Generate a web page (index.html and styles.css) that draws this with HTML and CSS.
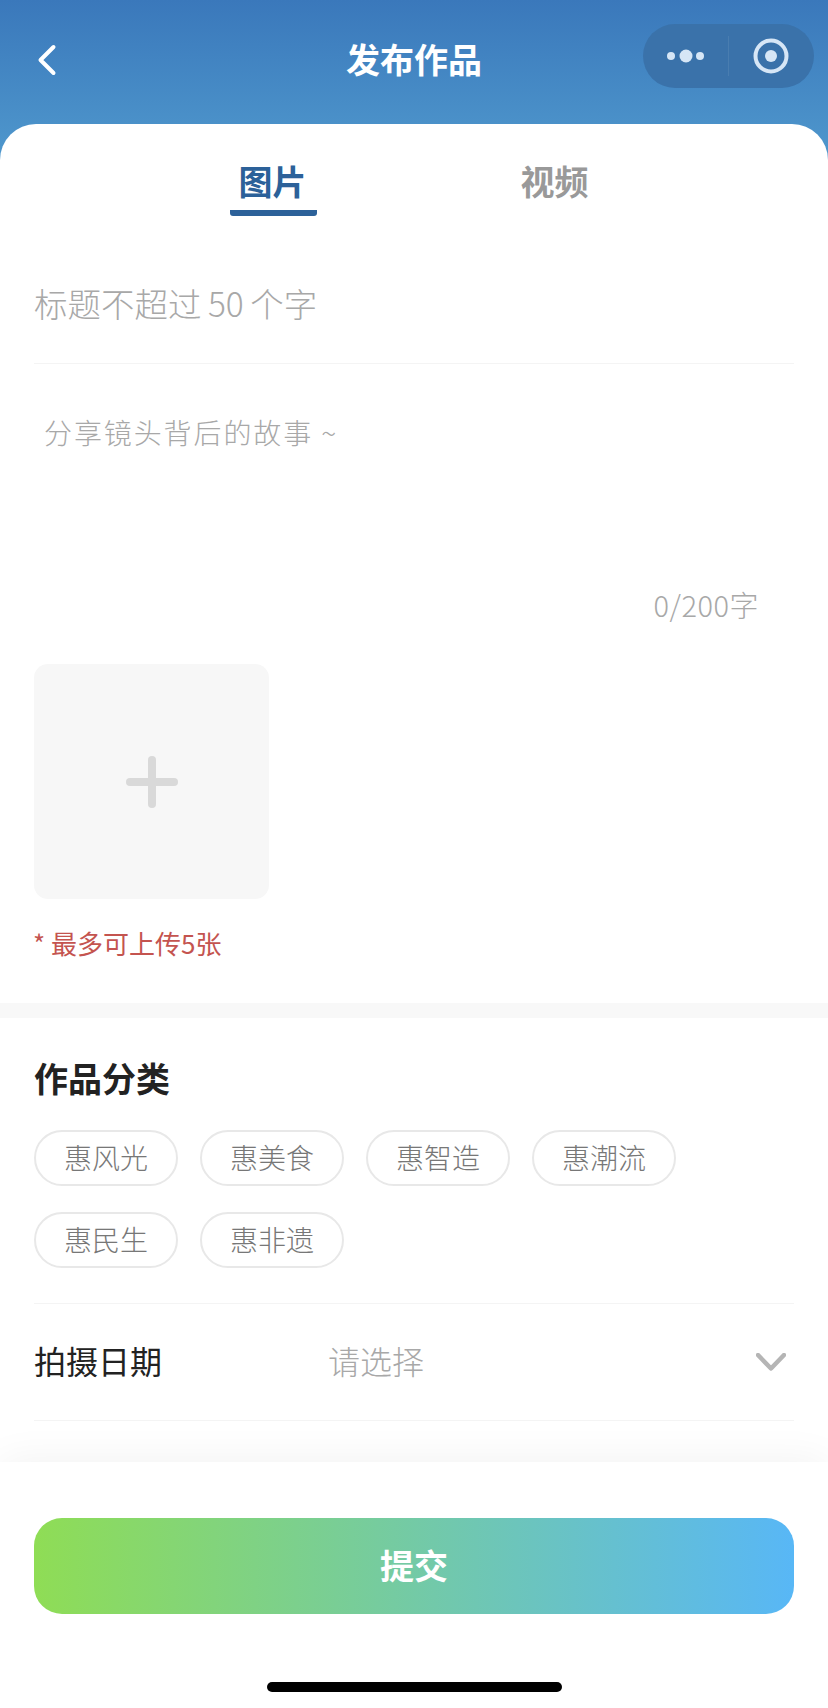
FILE: index.html
```html
<!DOCTYPE html>
<html lang="zh-CN">
<head>
<meta charset="utf-8">
<title>发布作品</title>
<link rel="stylesheet" href="styles.css">
</head>
<body>
<div class="page">
  <header class="navbar">
    <svg class="back" width="20" height="32" viewBox="0 0 20 32"><path d="M16.500 3 3.500 16 16.500 29" fill="none" stroke="#fff" stroke-width="4" stroke-linecap="round" stroke-linejoin="round"/></svg>
    <h1 class="nav-title">发布作品</h1>
    <div class="capsule">
      <svg class="capsule-more" width="85" height="64" viewBox="0 0 85 64"><circle cx="28" cy="32" r="4" fill="#d6e6f6"/><circle cx="43" cy="32" r="6.500" fill="#d6e6f6"/><circle cx="57" cy="32" r="4" fill="#d6e6f6"/></svg>
      <span class="capsule-line"></span>
      <svg class="capsule-close" width="85" height="64" viewBox="0 0 85 64"><circle cx="42" cy="32" r="15.500" fill="none" stroke="#d6e6f6" stroke-width="4"/><circle cx="42" cy="32" r="6" fill="#d6e6f6"/></svg>
    </div>
  </header>

  <main class="card">
    <nav class="tabs">
      <div class="tab tab-active">图片</div>
      <div class="tab">视频</div>
    </nav>

    <div class="field-title">标题不超过 50 个字</div>
    <div class="field-story">分享镜头背后的故事 ~</div>
    <div class="counter">0/200字</div>

    <div class="upload">
      <span class="upload-plus"></span>
    </div>
    <p class="note">* 最多可上传5张</p>

    <div class="band"></div>

    <section class="category">
      <h2 class="section-title">作品分类</h2>
      <div class="tags">
        <span class="tag">惠风光</span>
        <span class="tag">惠美食</span>
        <span class="tag">惠智造</span>
        <span class="tag">惠潮流</span>
        <span class="tag">惠民生</span>
        <span class="tag">惠非遗</span>
      </div>
      <div class="date-row">
        <span class="date-label">拍摄日期</span>
        <span class="date-value">请选择</span>
        <svg class="chevron" width="30" height="18" viewBox="0 0 30 18"><path d="M2 2 15 15.500 28 2" fill="none" stroke="#b5b5b5" stroke-width="4.500" stroke-linecap="round" stroke-linejoin="round"/></svg>
      </div>
    </section>
  </main>

  <footer class="footer">
    <button class="submit" type="button">提交</button>
    <div class="home-bar"></div>
  </footer>
</div>
</body>
</html>
```

FILE: styles.css
```css
* { box-sizing: border-box; }

html, body {
  margin: 0;
  padding: 0;
  background: #fff;
}

body {
  font-family: "Noto Sans CJK SC", "Noto Sans", sans-serif;
}

.page {
  width: 828px;
  height: 1708px;
  overflow: hidden;
  display: flex;
  flex-direction: column;
  background: linear-gradient(180deg, #3a78bb 0, #4f98cd 160px) no-repeat;
  background-size: 100% 160px;
}

.navbar {
  height: 124px;
  flex: none;
  padding: 24px 14px 0 37px;
  display: grid;
  grid-template-columns: 1fr auto 1fr;
  align-items: start;
}

.back {
  margin-top: 20px;
  display: block;
}

.nav-title {
  margin: 13px 0 0;
  font-size: 34px;
  line-height: 44px;
  font-weight: 700;
  color: #fff;
  transform: translateX(-11.500px);
}

.capsule {
  justify-self: end;
  width: 171px;
  height: 64px;
  border-radius: 32px;
  background: #3a72aa;
  display: flex;
  align-items: center;
}

.capsule-more, .capsule-close { display: block; flex: none; }

.capsule-line {
  width: 1px;
  height: 40px;
  flex: none;
  background: rgba(255, 255, 255, .08);
}

.card {
  flex: 1;
  min-height: 0;
  overflow: hidden;
  background: #fff;
  border-radius: 36px 36px 0 0;
  padding-top: 36px;
}

.tabs {
  display: flex;
  padding-left: 230px;
  gap: 194px;
}

.tab {
  width: 87px;
  height: 56px;
  font-size: 34px;
  line-height: 41px;
  font-weight: 700;
  text-align: center;
  color: #999;
}

.tab-active {
  padding-right: 2px;
  color: #2c6199;
  border-bottom: 6px solid #2c6199;
  border-radius: 0 0 3px 3px;
}

.field-title {
  margin: 0 34px;
  padding: 65px 0 38px;
  border-bottom: 1px solid #f4f4f4;
  font-size: 33.500px;
  line-height: 44px;
  word-spacing: -1px;
  font-weight: 300;
  color: #a8a8a8;
}

.field-story {
  margin-top: 48px;
  padding-left: 44px;
  font-size: 28px;
  line-height: 40px;
  letter-spacing: 1.900px;
  font-weight: 300;
  color: #a8a8a8;
}

.counter {
  margin-top: 132px;
  padding-right: 69px;
  text-align: right;
  font-size: 29px;
  line-height: 40px;
  letter-spacing: .5px;
  font-weight: 300;
  color: #a8a8a8;
}

.upload {
  margin: 40px 0 0 34px;
  width: 235px;
  height: 235px;
  border-radius: 14px;
  background: #f7f7f7;
  display: flex;
  align-items: center;
  justify-content: center;
}

.upload-plus {
  position: relative;
  width: 52px;
  height: 8px;
  border-radius: 4px;
  background: #d9d9d9;
}

.upload-plus::after {
  content: "";
  position: absolute;
  left: 22px;
  top: -22px;
  width: 8px;
  height: 52px;
  border-radius: 4px;
  background: #d9d9d9;
}

.note {
  margin: 26px 0 0 33px;
  font-size: 26px;
  line-height: 36px;
  color: #c4544f;
}

.band {
  margin-top: 42px;
  height: 15px;
  background: #f8f8f8;
}

.category {
  padding: 38px 34px 0;
}

.section-title {
  margin: 0;
  font-size: 34px;
  line-height: 44px;
  font-weight: 700;
  color: #222;
}

.tags {
  margin-top: 30px;
  padding-bottom: 35px;
  border-bottom: 1px solid #f4f4f4;
  display: flex;
  flex-wrap: wrap;
  gap: 26px 22px;
}

.tag {
  width: 144px;
  height: 56px;
  border: 2px solid #e8e8e8;
  border-radius: 28px;
  font-size: 28px;
  line-height: 51px;
  text-align: center;
  font-weight: 300;
  color: #777;
}

.date-row {
  height: 117px;
  padding: 0 8px 4px 0;
  border-bottom: 1px solid #f4f4f4;
  display: flex;
  align-items: center;
}

.date-label {
  width: 294px;
  font-size: 32px;
  color: #222;
}

.date-value {
  flex: 1;
  font-size: 32px;
  font-weight: 300;
  color: #a8a8a8;
}

.chevron { display: block; margin-top: 4px; }

.footer {
  flex: none;
  height: 246px;
  position: relative;
  padding: 56px 34px 0;
  background: #fff;
  box-shadow: 0 0 40px rgba(0, 0, 0, .06);
}

.submit {
  display: block;
  width: 760px;
  height: 96px;
  border: 0;
  border-radius: 28px;
  padding: 0 0 4px;
  background: linear-gradient(90deg, #8fdd55 0%, #58b7f6 100%);
  font-family: inherit;
  font-size: 34px;
  font-weight: 700;
  color: #fff;
}

.home-bar {
  width: 295px;
  height: 10px;
  margin: 68px auto 0;
  border-radius: 5px;
  background: #000;
}
```
